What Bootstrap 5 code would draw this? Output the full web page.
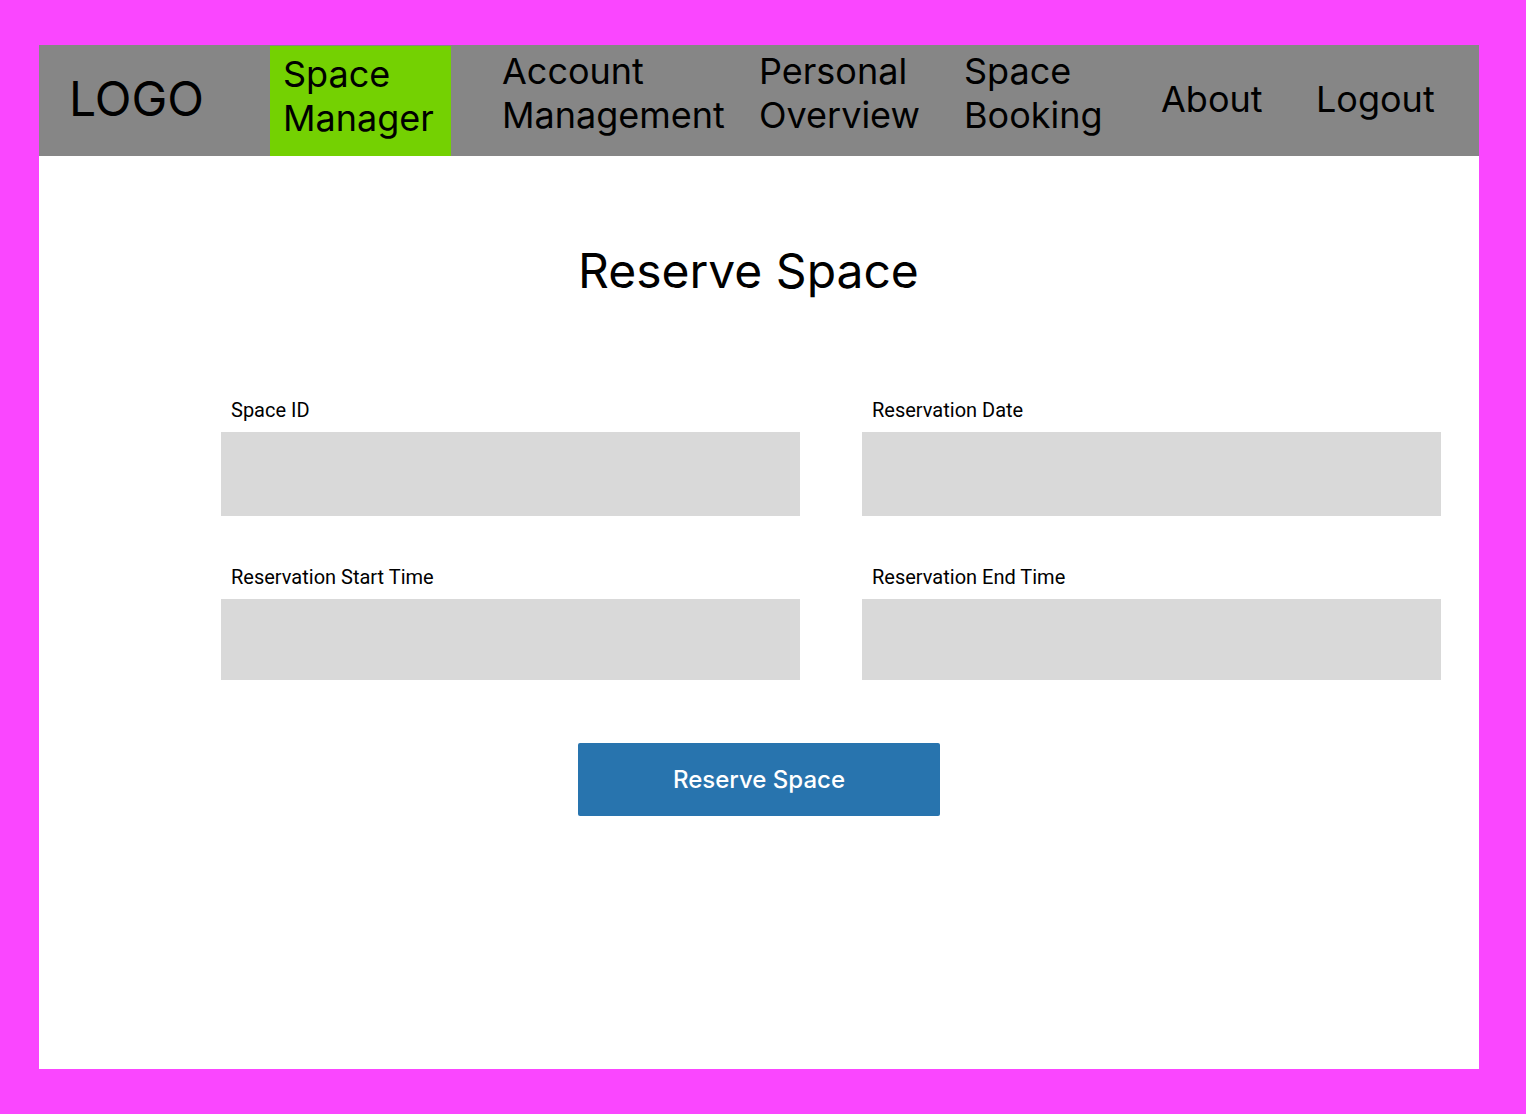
<!DOCTYPE html>
<html lang="en">
<head>
<meta charset="utf-8">
<meta name="viewport" content="width=device-width, initial-scale=1">
<title>Reserve Space</title>
<link href="https://cdn.jsdelivr.net/npm/bootstrap@5.3.0/dist/css/bootstrap.min.css" rel="stylesheet">
<style>
  body {
    background: #fa46ff;
    color: #000;
    font-family: Inter, "Liberation Sans", sans-serif;
    padding: 45px 47px 45px 39px;
  }
  .page-panel { min-height: calc(100vh - 90px); }
  .site-nav {
    display: grid;
    grid-template-columns: 231fr 181fr 308fr 205fr 197fr 155fr 163fr;
    min-height: 111px;
    background: #868686;
    font-size: 36px;
    line-height: 44px;
  }
  .site-nav a { color: #000; text-decoration: none; white-space: nowrap; }
  .site-nav .one-line { align-self: center; padding-bottom: 3px; }
  .site-nav .brand-link { font-size: 48px; line-height: 58px; padding-left: 30px; }
  .site-nav .two-line { padding-top: 4px; }
  .site-nav .current { background: #74d102; margin-top: 1px; padding: 6px 0 0 13px; }
  .site-nav .wide-item { padding-left: 51px; }
  .center-block { width: 362px; max-width: 100%; }
  .page-title { font-size: 48px; line-height: 58px; font-weight: 400; margin: 86px 0 98px; }
  .reserve-form { padding: 0 38px 63px 182px; }
  .field-grid { display: grid; grid-template-columns: 1fr 1fr; gap: 49px 62px; }
  .field-label {
    display: block;
    font-family: Roboto, sans-serif;
    font-size: 20px;
    line-height: 24px;
    margin-bottom: 10px;
    padding-left: 10px;
  }
  .field-grid .form-control {
    background: #d9d9d9;
    border: 0;
    border-radius: 0;
    height: 84px;
    font-size: 20px;
  }
  .field-grid .time-input { height: 81px; }
  .submit-btn {
    height: 73px;
    border: 0;
    border-radius: 2px;
    background: #2874ae;
    color: #fff;
    font-size: 24px;
    font-weight: 500;
  }
  .submit-btn:hover { background: #205f90; color: #fff; }
</style>
</head>
<body>
<div class="page-panel bg-white">
  <nav class="site-nav" aria-label="Main">
    <a class="one-line brand-link" href="#">LOGO</a>
    <a class="current" href="#" aria-current="page">Space<br>Manager</a>
    <a class="two-line wide-item" href="#">Account<br>Management</a>
    <a class="two-line" href="#">Personal<br>Overview</a>
    <a class="two-line" href="#">Space<br>Booking</a>
    <a class="one-line" href="#">About</a>
    <a class="one-line" href="#">Logout</a>
  </nav>
  <main>
    <div class="center-block mx-auto">
      <h1 class="page-title text-nowrap">Reserve Space</h1>
    </div>
    <form>
      <div class="reserve-form">
        <div class="field-grid">
          <div>
            <label class="field-label" for="space-id">Space ID</label>
            <input class="form-control" type="text" id="space-id">
          </div>
          <div>
            <label class="field-label" for="res-date">Reservation Date</label>
            <input class="form-control" type="text" id="res-date">
          </div>
          <div>
            <label class="field-label" for="start-time">Reservation Start Time</label>
            <input class="form-control time-input" type="text" id="start-time">
          </div>
          <div>
            <label class="field-label" for="end-time">Reservation End Time</label>
            <input class="form-control time-input" type="text" id="end-time">
          </div>
        </div>
      </div>
      <div class="center-block mx-auto">
        <button class="btn submit-btn w-100" type="submit">Reserve Space</button>
      </div>
    </form>
  </main>
</div>
<script src="https://cdn.jsdelivr.net/npm/bootstrap@5.3.0/dist/js/bootstrap.bundle.min.js"></script>
</body>
</html>
